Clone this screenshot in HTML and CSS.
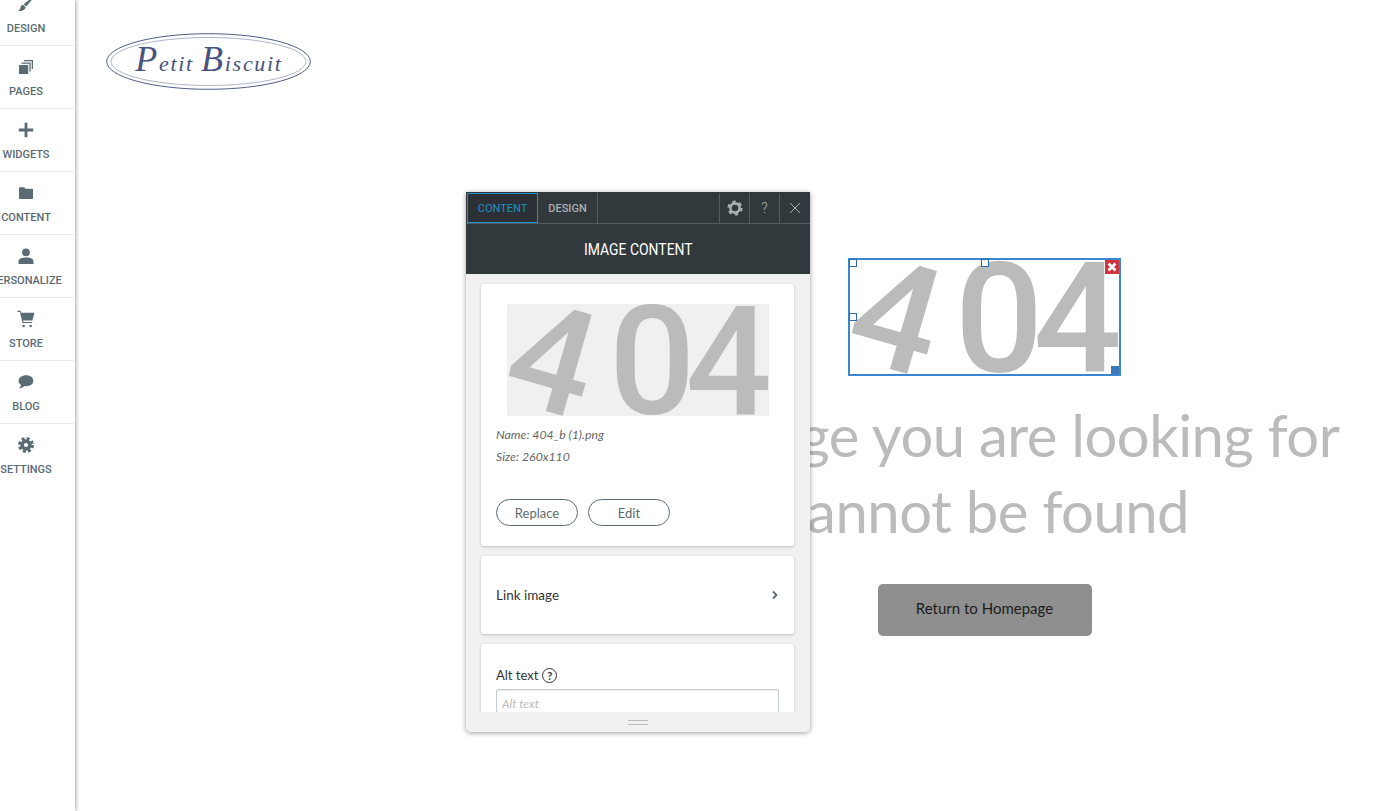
FILE: index.html
```html
<!DOCTYPE html>
<html lang="en">
<head>
    <meta charset="UTF-8">
    <meta name="viewport" content="width=device-width, initial-scale=1.0">
    <title>Petit Biscuit - Editor</title>
    <link rel="stylesheet" href="styles.css">
</head>
<body>
    <!-- Editor sidebar -->
    <nav class="sidebar">
        <a class="side-item">
            <svg class="side-icon" viewBox="0 0 16 16"><path d="M16 0 16.4 0.8 8.2 10.6 5.6 8.2Z"/><path d="M5 8.8 7.6 11.2C7.2 13.8 3.6 15.4 0 14.8 2 14 2.2 12.6 2.6 11 2.9 9.9 3.9 9 5 8.8Z"/></svg>
            <span>Design</span>
        </a>
        <a class="side-item">
            <svg class="side-icon" viewBox="0 0 16 16"><path d="M1 6H10.2V15H1Z"/><path d="M3.5 3.5H12.7V12.5H11.4V4.8H3.5Z"/><path d="M6 1H15V10H13.7V2.3H6Z"/></svg>
            <span>Pages</span>
        </a>
        <a class="side-item">
            <svg class="side-icon" viewBox="0 0 16 16"><path d="M6.6 0.8H9.4V6.6H15.2V9.4H9.4V15.2H6.6V9.4H0.8V6.6H6.6Z" stroke-linejoin="round"/></svg>
            <span>Widgets</span>
        </a>
        <a class="side-item">
            <svg class="side-icon" viewBox="0 0 16 16"><path d="M1 3.2C1 2.6 1.4 2.2 2 2.2H6.2L7.6 3.8H14C14.6 3.8 15 4.2 15 4.8V13C15 13.6 14.6 14 14 14H2C1.4 14 1 13.6 1 13Z"/></svg>
            <span>Content</span>
        </a>
        <a class="side-item">
            <svg class="side-icon" viewBox="0 0 16 16"><circle cx="8" cy="4.4" r="3.9"/><path d="M0.5 16V13.6C0.5 11 3.5 9.6 8 9.6 12.5 9.6 15.5 11 15.5 13.6V16Z"/></svg>
            <span>Personalize</span>
        </a>
        <a class="side-item">
            <svg class="side-icon side-cart" viewBox="0 0 18 18"><path d="M0.5 0.8H3.6L4.3 2.8H17.4L15.4 10.4H6.1L6.5 12H15V13H5.5L3 1.9H0.5Z"/><circle cx="6.6" cy="16" r="1.3"/><circle cx="13.6" cy="16" r="1.3"/></svg>
            <span>Store</span>
        </a>
        <a class="side-item">
            <svg class="side-icon" viewBox="0 0 16 16"><path d="M8.2 1.2C12.2 1.2 15.4 3.4 15.4 6.8 15.4 10.2 12.2 12.2 8.2 12.2 7.5 12.2 6.9 12.1 6.3 12 5 13.6 3.2 14.4 1 14.6 2 13.6 2.8 12.4 2.9 10.8 1.4 9.8 0.6 8.4 0.6 6.8 0.6 3.4 4.2 1.2 8.2 1.2Z"/></svg>
            <span>Blog</span>
        </a>
        <a class="side-item">
            <svg class="side-icon side-gear" viewBox="0 0 16 16"><circle cx="8" cy="8" r="6.5" class="gear-teeth"/><circle cx="8" cy="8" r="3.9" class="gear-ring"/></svg>
            <span>Settings</span>
        </a>
    </nav>

    <main class="page">
        <div class="logo-col">
            <svg class="logo" viewBox="0 0 205 57">
                <ellipse cx="102.5" cy="28.5" rx="101.8" ry="27.8" class="logo-line"/>
                <ellipse cx="102.5" cy="28.5" rx="97.5" ry="24" class="logo-line thin"/>
                <text x="103" y="38" text-anchor="middle" class="logo-text"><tspan class="logo-cap">P</tspan>etit <tspan class="logo-cap">B</tspan>iscuit</text>
            </svg>
        </div>

        <section class="notfound">
            <div class="image-box">
                <svg class="image-404" viewBox="0 0 262 112" preserveAspectRatio="none">
                    <text class="tilted" x="46" y="107" transform="rotate(16 46 54)" text-anchor="middle">4</text>
                    <text x="102" y="110">0</text>
                    <text x="178.5" y="110">4</text>
                </svg>
                <i class="handle handle-tl"></i>
                <i class="handle handle-tm"></i>
                <i class="handle handle-ml"></i>
                <span class="box-remove">
                    <svg viewBox="0 0 14 14"><path d="M3.5 3.5 10.5 10.5M10.5 3.5 3.5 10.5"/></svg>
                </span>
                <i class="box-resize"></i>
            </div>
            <h1 class="notfound-text">The page you are looking for cannot be found</h1>
            <a class="home-btn">Return to Homepage</a>
        </section>
    </main>

    <!-- Floating image settings panel -->
    <div class="panel">
        <div class="panel-tabs">
            <div class="tab active">CONTENT</div>
            <div class="tab">DESIGN</div>
            <div class="tab-spacer"></div>
            <div class="tab-btn">
                <svg class="tab-gear" viewBox="0 0 16 16"><circle cx="8" cy="8" r="6.4" class="gear-teeth"/><circle cx="8" cy="8" r="4.6" class="gear-ring"/></svg>
            </div>
            <div class="tab-btn tab-help">?</div>
            <div class="tab-btn">
                <svg class="tab-close" viewBox="0 0 12 12"><path d="M1 1 11 11M11 1 1 11"/></svg>
            </div>
        </div>
        <div class="panel-title"><span>IMAGE CONTENT</span></div>

        <div class="panel-body">
            <div class="card card-image">
                <div class="preview">
                    <svg class="image-404" viewBox="0 0 262 112" preserveAspectRatio="none">
                        <text class="tilted" x="46" y="107" transform="rotate(16 46 54)" text-anchor="middle">4</text>
                        <text x="102" y="110">0</text>
                        <text x="178.5" y="110">4</text>
                    </svg>
                </div>
                <p class="meta">Name: 404_b (1).png</p>
                <p class="meta">Size: 260x110</p>
                <div class="card-actions">
                    <button class="pill">Replace</button>
                    <button class="pill">Edit</button>
                </div>
            </div>

            <div class="card card-link">
                <span>Link image</span>
                <svg class="chevron" viewBox="0 0 8 10"><path d="M2 1.5 5.5 5 2 8.5"/></svg>
            </div>

            <div class="card card-alt">
                <label class="alt-label">Alt text <span class="help">?</span></label>
                <input class="alt-input" type="text" placeholder="Alt text">
            </div>
        </div>

        <div class="panel-foot"><span class="grip"></span></div>
    </div>
</body>
</html>
```

FILE: styles.css
```css
* {
    box-sizing: border-box;
}

html, body {
    margin: 0;
    height: 100%;
}

body {
    display: flex;
    overflow: hidden;
    background: #fff;
    font-family: "Liberation Sans", Arial, sans-serif;
}

/* sidebar */
.sidebar {
    flex: 0 0 75px;
    height: 100%;
    background: #fff;
    box-shadow: 1px 0 4px rgba(0, 0, 0, 0.35);
    z-index: 2;
    overflow: hidden;
}

.side-item {
    display: flex;
    flex-direction: column;
    align-items: center;
    width: 52px;
    height: 63px;
    padding-top: 13px;
    color: #5b6b73;
    font-family: Roboto, sans-serif;
    font-size: 11px;
    font-weight: 500;
    text-transform: uppercase;
    white-space: nowrap;
    position: relative;
}

.side-item:first-child {
    margin-top: -17px;
}

.side-item::after {
    content: "";
    position: absolute;
    left: 0;
    bottom: 0;
    width: 75px;
    height: 1px;
    background: #e9ecee;
}

.side-item:last-child::after {
    display: none;
}

.side-icon {
    flex: none;
    width: 16px;
    height: 16px;
    margin-bottom: 10px;
    fill: #5b6b73;
    overflow: visible;
}

.side-cart {
    width: 18px;
    height: 18px;
    margin-top: -1px;
    margin-bottom: 9px;
}

.gear-teeth {
    fill: none;
    stroke: #5b6b73;
    stroke-width: 3;
    stroke-dasharray: 2.9 2.2;
}

.gear-ring {
    fill: none;
    stroke: #5b6b73;
    stroke-width: 3.6;
}

/* page behind the panel */
.page {
    flex: 1;
    display: grid;
    grid-template-columns: 520px 1fr;
}

.logo-col {
    padding: 33px 0 0 31px;
}

.logo {
    display: block;
    width: 205px;
    height: 57px;
}

.logo-line {
    fill: none;
    stroke: #3c4a78;
    stroke-width: 0.9;
}

.logo-line.thin {
    stroke: #8a93b0;
    stroke-width: 0.7;
}

.logo-text {
    fill: #46537f;
    font-family: "Liberation Serif", serif;
    font-style: italic;
    font-size: 22px;
    letter-spacing: 1.7px;
}

.logo-cap {
    font-size: 36px;
}

.notfound {
    display: flex;
    flex-direction: column;
    align-items: center;
    padding-top: 258px;
}

.image-box {
    position: relative;
    width: 273px;
    height: 118px;
    border: 2px solid #3a87cf;
}

.image-404 {
    display: block;
    width: 100%;
    height: 100%;
}

.image-404 text {
    fill: #bbb;
    font-family: Roboto, sans-serif;
    font-size: 152px;
    font-weight: 500;
}

.image-404 .tilted {
    font-size: 148px;
}

.handle {
    position: absolute;
    width: 8px;
    height: 8px;
    background: #fff;
    border: 1px solid #2a6aa8;
}

.handle-tl {
    left: -1px;
    top: -1px;
}

.handle-tm {
    left: 131px;
    top: -1px;
}

.handle-ml {
    left: -1px;
    top: 53px;
}

.box-remove {
    position: absolute;
    right: 0;
    top: 0;
    width: 14px;
    height: 14px;
    background: #d0343a;
}

.box-remove svg {
    display: block;
    fill: none;
    stroke: #fff;
    stroke-width: 2.8;
}

.box-resize {
    position: absolute;
    right: 0;
    bottom: 0;
    width: 8px;
    height: 8px;
    background: #3a78b8;
}

.notfound-text {
    width: 740px;
    margin: 21px 0 35px;
    color: #bbb;
    font-family: Lato, sans-serif;
    font-size: 58px;
    font-weight: 400;
    letter-spacing: -0.5px;
    line-height: 76px;
    text-align: center;
}

.home-btn {
    width: 214px;
    height: 52px;
    background: #8f8f8f;
    border-radius: 5px;
    color: #1c1c1c;
    font-family: Lato, sans-serif;
    font-size: 15px;
    line-height: 49px;
    text-align: center;
}

/* floating panel */
.panel {
    position: absolute;
    left: 466px;
    top: 192px;
    width: 344px;
    height: 540px;
    display: flex;
    flex-direction: column;
    background: #f1f1f1;
    border-radius: 0 0 5px 5px;
    box-shadow: 0 1px 5px rgba(0, 0, 0, 0.4);
    z-index: 3;
    overflow: hidden;
}

.panel-tabs {
    display: flex;
    flex: none;
    height: 32px;
    padding: 1px 1px 0;
    background: #32393c;
    border-bottom: 1px solid #545c60;
    color: #a9afb2;
    font-family: Roboto, sans-serif;
    font-size: 11px;
    font-weight: 500;
}

.tab {
    display: flex;
    align-items: center;
    justify-content: center;
    width: 60px;
    border-right: 1px solid #545c60;
}

.tab.active {
    width: 71px;
    height: 30px;
    background: #2b3036;
    border: 1px solid #2290c8;
    color: #2290c8;
    font-weight: 400;
}

.tab-spacer {
    flex: 1;
}

.tab-btn {
    display: flex;
    align-items: center;
    justify-content: center;
    width: 30px;
    border-left: 1px solid #545c60;
}

.tab-help {
    font-size: 14px;
    font-weight: 300;
}

.tab-gear {
    width: 16px;
    height: 16px;
}

.tab-gear .gear-teeth {
    stroke: #a9afb2;
    stroke-width: 2.4;
    stroke-dasharray: 3.2 3.5;
}

.tab-gear .gear-ring {
    stroke: #a9afb2;
    stroke-width: 2.6;
}

.tab-close {
    width: 12px;
    height: 12px;
    fill: none;
    stroke: #a9afb2;
    stroke-width: 1;
}

.panel-title {
    flex: none;
    height: 50px;
    background: #32393c;
    color: #fff;
    font-family: Roboto, sans-serif;
    font-size: 17px;
    line-height: 50px;
    text-align: center;
}

.panel-title span {
    display: inline-block;
    transform: scaleX(0.82);
}

.panel-body {
    flex: 1;
    min-height: 0;
    overflow: hidden;
    padding: 10px 16px 0 15px;
    font-family: Lato, sans-serif;
}

.card {
    background: #fff;
    border-radius: 3px;
    box-shadow: 0 1px 3px rgba(0, 0, 0, 0.22);
    margin-bottom: 10px;
}

.card-image {
    height: 262px;
    padding: 20px 15px 0;
}

.preview {
    width: 262px;
    height: 112px;
    margin: 0 0 0 11px;
    background: #f0f0f0;
    border-radius: 2px;
    overflow: hidden;
}

.meta {
    margin: 0;
    height: 22px;
    color: #666;
    font-size: 12.3px;
    font-style: italic;
    line-height: 22px;
}

.preview + .meta {
    margin-top: 8px;
}

.card-actions {
    display: flex;
    gap: 10px;
    margin-top: 31px;
}

.pill {
    width: 82px;
    height: 27px;
    padding: 0;
    background: #fff;
    border: 1px solid #5b6b73;
    border-radius: 14px;
    color: #5b6b73;
    font-family: Lato, sans-serif;
    font-size: 13px;
}

.card-link {
    display: flex;
    align-items: center;
    justify-content: space-between;
    height: 78px;
    padding: 0 15px;
    color: #333;
    font-size: 13.5px;
}

.chevron {
    width: 8px;
    height: 10px;
    fill: none;
    stroke: #5b6b73;
    stroke-width: 1.8;
}

.card-alt {
    height: 100px;
    padding: 23px 15px 0;
}

.alt-label {
    display: flex;
    align-items: center;
    gap: 4px;
    color: #333;
    font-size: 13px;
}

.help {
    width: 15px;
    height: 15px;
    border: 1px solid #333;
    border-radius: 50%;
    font-size: 11px;
    font-weight: 700;
    line-height: 13px;
    text-align: center;
}

.alt-input {
    display: block;
    width: 100%;
    height: 28px;
    margin-top: 6px;
    padding: 0 5px;
    border: 1px solid #c5ced4;
    border-radius: 2px;
    box-shadow: inset 0 1px 1px rgba(0, 0, 0, 0.08);
    font-family: Lato, sans-serif;
    font-size: 12px;
    font-style: italic;
}

.alt-input::placeholder {
    color: #bbb;
}

.panel-foot {
    display: flex;
    flex: none;
    align-items: center;
    justify-content: center;
    height: 20px;
    background: #f1f1f1;
}

.grip {
    width: 20px;
    height: 5px;
    border-top: 1px solid #bbb;
    border-bottom: 1px solid #bbb;
}
```
